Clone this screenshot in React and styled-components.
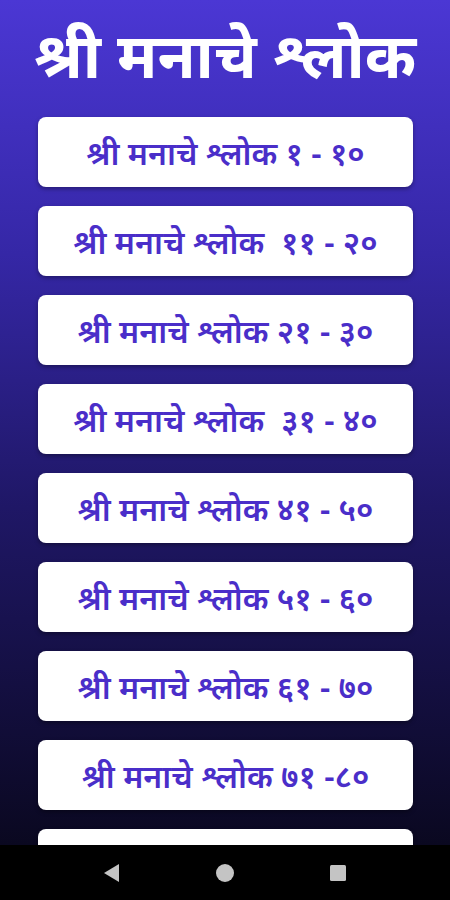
import React from 'react'
import styled, { createGlobalStyle } from 'styled-components'

const GlobalStyle = createGlobalStyle`
  html, body {
    margin: 0;
    padding: 0;
    background: #000;
  }
  * {
    box-sizing: border-box;
  }
`
const Screen = styled.div`
  width: 450px;
  height: 900px;
  display: flex;
  flex-direction: column;
  overflow: hidden;
  font-family: "Noto Sans", "Noto Sans Devanagari", "Lohit Devanagari", sans-serif;
`
const Content = styled.div`
  flex: 1;
  overflow: hidden;
  background: linear-gradient(180deg, #4b37d4 0%, #3527a6 30%, #1f1766 60%, #0a0820 100%);
  padding: 16px 0 0;
`
const Title = styled.h1`
  margin: 0;
  height: 82px;
  color: #fff;
  font-size: 62px;
  font-weight: 700;
  text-align: center;
  line-height: 76px;
  white-space: nowrap;
`
const List = styled.div`
  display: flex;
  flex-direction: column;
  gap: 19px;
  padding: 19px 37px 0 38px;
`
const Item = styled.button`
  height: 70px;
  width: 100%;
  flex-shrink: 0;
  border: none;
  border-radius: 8px;
  background: #fff;
  box-shadow: 0 2px 4px rgba(0, 0, 0, 0.35);
  color: #4a2ec9;
  font-family: inherit;
  font-size: 32px;
  font-weight: 600;
  white-space: pre;
  cursor: pointer;
`
const NavBar = styled.div`
  height: 55px;
  flex-shrink: 0;
  background: #000;
  display: flex;
  justify-content: space-around;
  align-items: center;
  padding: 0 56px;
`
const NavIcon = styled.svg`
  width: 24px;
  height: 24px;
  fill: #c4c4c4;
`

const items = [
  'श्री मनाचे श्लोक १ - १०',
  'श्री मनाचे श्लोक  ११ - २०',
  'श्री मनाचे श्लोक २१ - ३०',
  'श्री मनाचे श्लोक  ३१ - ४०',
  'श्री मनाचे श्लोक ४१ - ५०',
  'श्री मनाचे श्लोक ५१ - ६०',
  'श्री मनाचे श्लोक ६१ - ७०',
  'श्री मनाचे श्लोक ७१ -८०',
  'श्री मनाचे श्लोक ८१ - ९०',
]

export default function App() {
  return (
    <Screen>
      <GlobalStyle />
      <Content>
        <Title>श्री मनाचे श्लोक</Title>
        <List>
          {items.map((t, i) => (
            <Item key={i}>{t}</Item>
          ))}
        </List>
      </Content>
      <NavBar>
        <NavIcon viewBox="0 0 24 24">
          <path d="M19 3 L19 21 L4 12 Z" />
        </NavIcon>
        <NavIcon viewBox="0 0 24 24">
          <circle cx="12" cy="12" r="9" />
        </NavIcon>
        <NavIcon viewBox="0 0 24 24">
          <rect x="4" y="4" width="16" height="16" rx="1.5" />
        </NavIcon>
      </NavBar>
    </Screen>
  )
}
